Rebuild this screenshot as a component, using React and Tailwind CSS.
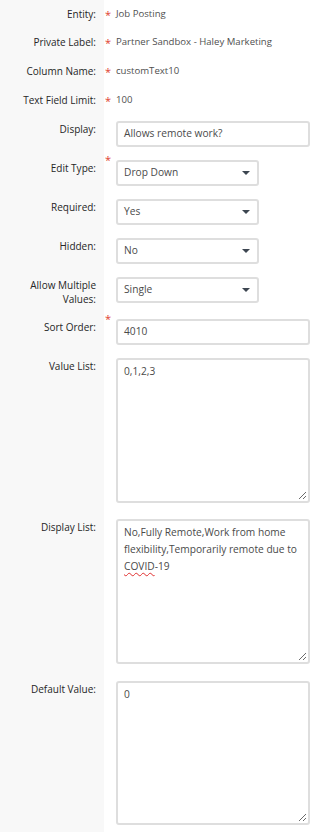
const Star = ({ raised }) => (
  <span className={raised ? "block -mt-[6px] leading-none text-[#e0412f] text-[11px]" : "text-[#e0412f] text-[11px] leading-none"}>
    *
  </span>
);

const TextRow = ({ label, value, first }) => (
  <div className={`grid grid-cols-[104px_12px_1fr] ${first ? "h-[28px]" : "h-[29px]"}`}>
    <div className="bg-[#f8f8f8] flex items-center justify-end pr-2 text-[#262626]">{label}</div>
    <div className="flex items-center pl-[1px]">
      <Star />
    </div>
    <div className="flex items-center text-[#4f4f4f] text-[9.6px]">{value}</div>
  </div>
);

const FieldRow = ({ label, required, pt = "pt-0", pb, children }) => (
  <div className="grid grid-cols-[104px_12px_1fr]">
    <div className={`bg-[#f8f8f8] text-right pr-2 leading-[14px] text-[#262626] ${pt}`}>
      <div className="pt-[1px]">{label}</div>
    </div>
    <div className={`pl-[1px] ${pt}`}>{required && <Star raised />}</div>
    <div className={`${pt} ${pb}`}>{children}</div>
  </div>
);

const Input = ({ value }) => (
  <div className="w-[194px] h-[26px] border-2 border-[#dedede] rounded-[3px] bg-white flex items-center px-[6px] text-[10.2px] text-[#4a4a4a]">
    {value}
  </div>
);

const Select = ({ value }) => (
  <div className="w-[143px] h-[26px] border-2 border-[#dedede] rounded-[3px] bg-white flex items-center justify-between pl-[6px] pr-[7px] text-[10.2px] text-[#4a4a4a]">
    <span>{value}</span>
    <svg width="8" height="4" viewBox="0 0 8 4">
      <path d="M0 0 L8 0 L4 4 Z" fill="#3d4651" />
    </svg>
  </div>
);

const TextArea = ({ h, children }) => (
  <div className={`relative w-[194px] ${h} border-2 border-[#dedede] rounded-[3px] bg-white px-[6px] pt-[3px] text-[10.2px] leading-[17px] text-[#4a4a4a] whitespace-nowrap`}>
    {children}
    <svg className="absolute right-[1px] bottom-[1px]" width="9" height="9" viewBox="0 0 9 9">
      <path d="M8 1 L1 8 M8 5 L5 8" stroke="#6b6b6b" strokeWidth="1" />
    </svg>
  </div>
);

export default function App() {
  return (
    <div className="w-[326px] h-[832px] bg-white text-[10px] font-['Open_Sans',sans-serif]">
      <TextRow first label="Entity:" value="Job Posting" />
      <TextRow label="Private Label:" value="Partner Sandbox - Haley Marketing" />
      <TextRow label="Column Name:" value="customText10" />
      <TextRow label="Text Field Limit:" value="100" />

      <FieldRow label="Display:" pt="pt-[6px]" pb="pb-[13px]">
        <Input value="Allows remote work?" />
      </FieldRow>
      <FieldRow label="Edit Type:" required pb="pb-[13px]">
        <Select value="Drop Down" />
      </FieldRow>
      <FieldRow label="Required:" pb="pb-[13px]">
        <Select value="Yes" />
      </FieldRow>
      <FieldRow label="Hidden:" pb="pb-[13px]">
        <Select value="No" />
      </FieldRow>
      <FieldRow
        label={
          <>
            Allow Multiple
            <br />
            Values:
          </>
        }
        pb="pb-[16px]"
      >
        <Select value="Single" />
      </FieldRow>
      <FieldRow label="Sort Order:" required pb="pb-[13px]">
        <Input value="4010" />
      </FieldRow>
      <FieldRow label="Value List:" pb="pb-[16px]">
        <TextArea h="h-[145px]">0,1,2,3</TextArea>
      </FieldRow>
      <FieldRow label="Display List:" pb="pb-[17px]">
        <TextArea h="h-[145px]">
          No,Fully Remote,Work from home
          <br />
          flexibility,Temporarily remote due to
          <br />
          <span className="underline decoration-wavy decoration-[#e03030] decoration-[1px] underline-offset-2">COVID</span>-19
        </TextArea>
      </FieldRow>
      <FieldRow label="Default Value:" pb="pb-[7px]">
        <TextArea h="h-[144px]">0</TextArea>
      </FieldRow>
    </div>
  );
}
